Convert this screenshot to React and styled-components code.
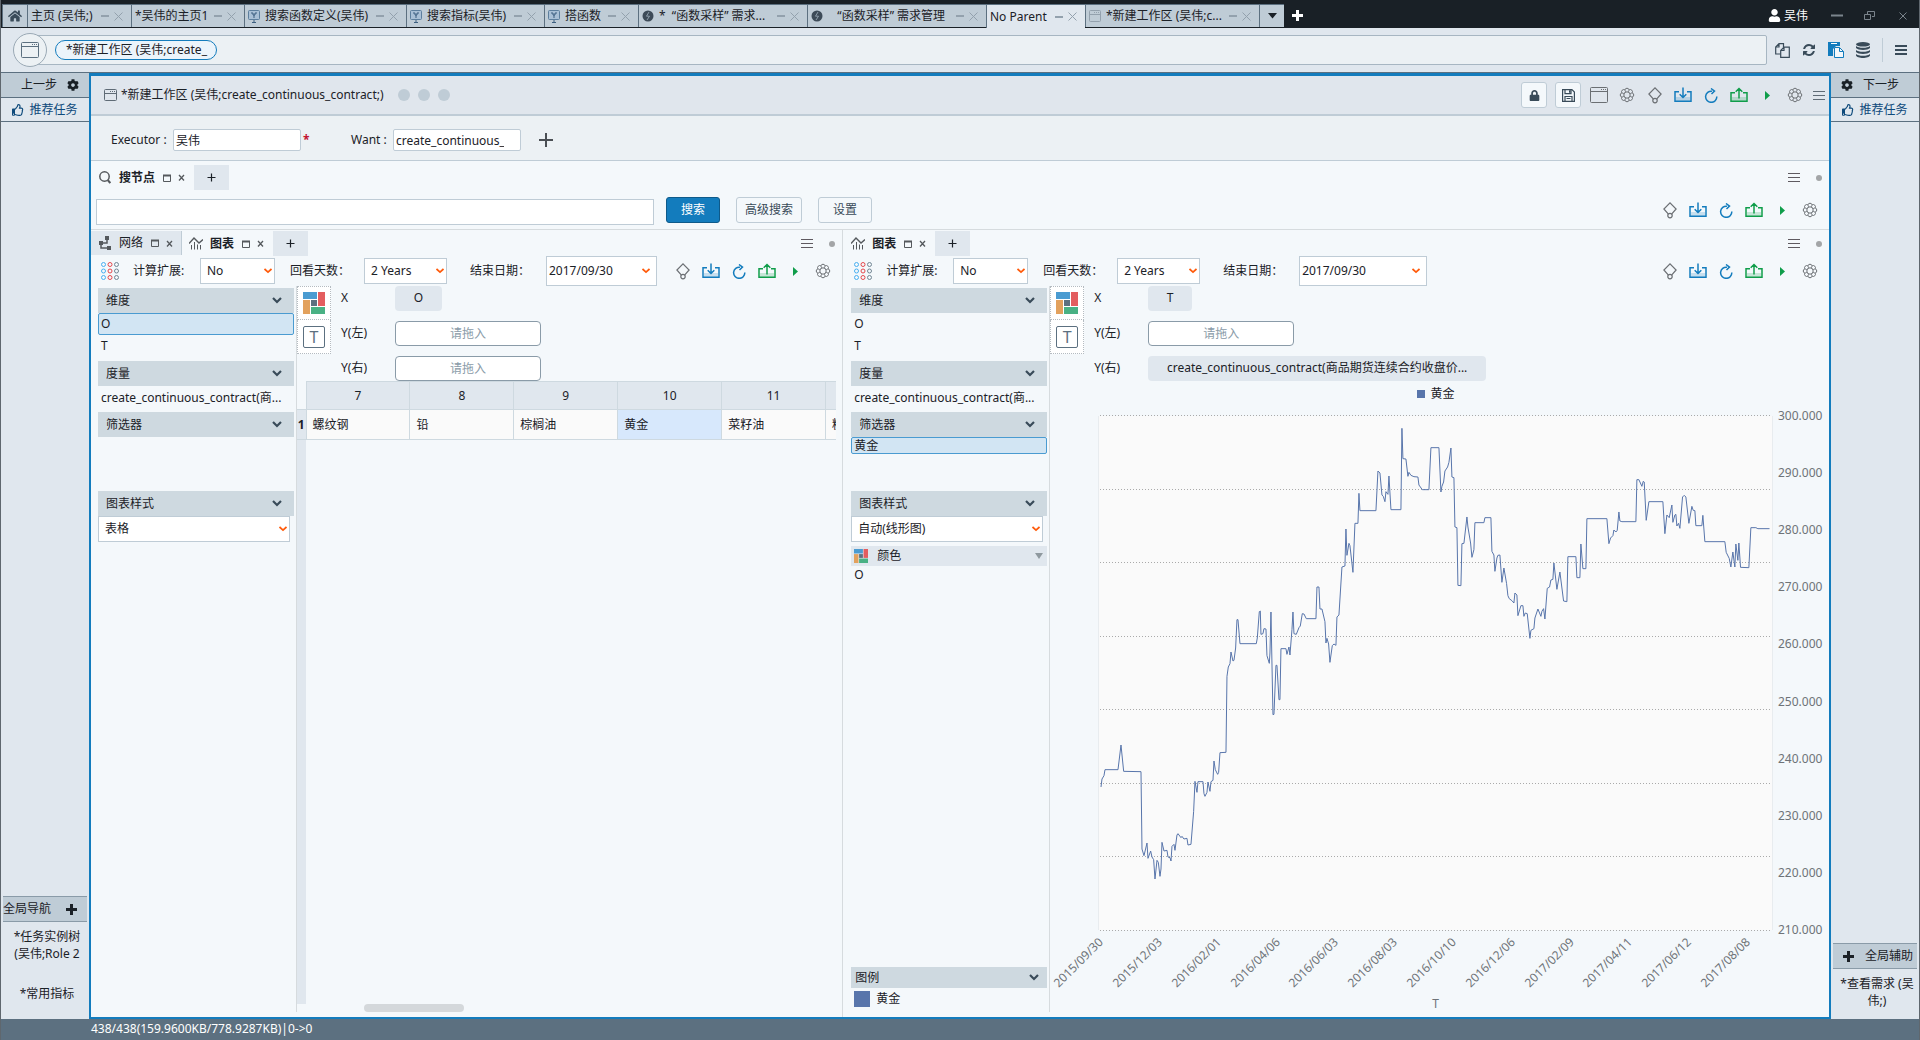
import React from "react";
import styled, { createGlobalStyle, css } from "styled-components";
import { FaHome, FaUser, FaCog, FaLock, FaRegThumbsUp } from "react-icons/fa";

const c = {
  dark: "#192026",
  text: "#1b2127",
  slate: "#5c7080",
  line: "#bfccd6",
  head: "#ced9e0",
  chrome: "#e0e7ee",
  form: "#ecf1f4",
  panel: "#f4f8fb",
  rule: "#d6dbde",
  blue: "#137cbd",
  green: "#0f9d4a",
  orange: "#ff5a0a",
  series: "#5875ab",
};

const GlobalStyle = createGlobalStyle`
  *, *::before, *::after { box-sizing: border-box; }
  body { margin: 0; }
  body, button, input, select, table {
    font: 12px/16px "Noto Sans", "Noto Sans CJK SC", sans-serif;
    color: ${c.text};
  }
  button { padding: 0; border: 0; background: none; cursor: pointer; }
  svg { display: block; flex: none; }
`;

/* ---------- icons ---------- */

const Svg = ({ w = 16, h = w, children, ...rest }) => (
  <svg width={w} height={h} viewBox={`0 0 ${w} ${h}`} fill="none" stroke="currentColor" aria-hidden="true" {...rest}>
    {children}
  </svg>
);
const MinusIcon = () => <Svg w={8} h={12} strokeWidth="2"><path d="M0 6h8" /></Svg>;
const CrossIcon = ({ size = 9 }) => <Svg w={size}><path d={`M.5 .5L${size - 0.5} ${size - 0.5}M${size - 0.5} .5L.5 ${size - 0.5}`} /></Svg>;
const SmallCross = () => <Svg w={7} strokeWidth="1.3"><path d="M1 1l5 5.5M6 1L1 6.5" /></Svg>;
const MaxIcon = () => <Svg w={8} h={8}><path d="M.5 1v6.500h7V1" /><path d="M0 1.500h8" strokeWidth="2" /></Svg>;
const WindowIcon = ({ w = 18, h = 16 }) => (
  <Svg w={w} h={h}>
    <rect x=".5" y=".5" width={w - 1} height={h - 1} rx="1" />
    <path d={`M1 4.500h${w - 2}`} />
    <path d={`M${w - 7} 2.500h5`} strokeDasharray="1 1" />
  </Svg>
);
const gearPoint = (k, r) => {
  const a = ((22.5 + 45 * k) * Math.PI) / 180;
  return `${(8 + r * Math.cos(a)).toFixed(2)} ${(8 + r * Math.sin(a)).toFixed(2)}`;
};
const gearOutline = `M${gearPoint(0, 5.5)}` + [1, 2, 3, 4, 5, 6, 7, 8].map((k) => `A2.150 2.150 0 0 1 ${gearPoint(k, 5.5)}`).join("") + "Z";
const gearSpokes = [0, 1, 2, 3, 4, 5, 6, 7].map((k) => `M${gearPoint(k, 5.5)}L${gearPoint(k, 3.3)}`).join("");
const GearIcon = () => (
  <Svg w={16}>
    <path d={gearOutline} />
    <path d={gearSpokes} strokeWidth=".8" />
    <circle cx="8" cy="8" r="3.200" />
  </Svg>
);
const DiamondIcon = () => (
  <Svg w={14} h={17} strokeWidth="1.200">
    <path d="M5.200 11.800L.9 7 7 .9 13.100 7l-4.300 4.800" />
    <circle cx="7" cy="13.600" r="2.200" />
  </Svg>
);
const InboxIcon = () => (
  <Svg w={18} h={16} strokeWidth="1.500">
    <path d="M2 10h14v4H2z" fill="currentColor" opacity=".2" stroke="none" />
    <path d="M5 4.700H1v9.500h16V4.700h-4M9 .5v10M5.700 7.200L9 10.500l3.300-3.300" />
  </Svg>
);
const OutboxIcon = () => (
  <Svg w={18} h={16} strokeWidth="1.500">
    <path d="M2 10h14v4H2z" fill="currentColor" opacity=".2" stroke="none" />
    <path d="M5 5.700H1v8.500h16V5.700h-4M9 11.500V1.500M5.700 4.800L9 1.500l3.300 3.300" />
  </Svg>
);
const RedoIcon = () => (
  <Svg w={14} h={15} strokeWidth="1.500">
    <path d="M12.800 8.500A5.600 5.600 0 1 1 8 3.200" />
    <path d="M7 .5l3.500 2.600L7.500 6" />
  </Svg>
);
const PlayIcon = () => <Svg w={5} h={9}><path d="M0 0l5 4.500L0 9z" fill="currentColor" stroke="none" /></Svg>;
const MenuIcon = () => <Svg w={12} h={11}><path d="M0 1.500h12M0 5.500h12M0 9.500h12" /></Svg>;
const MenuBoldIcon = () => <Svg w={12} h={10} strokeWidth="2"><path d="M0 1h12M0 5h12M0 9h12" /></Svg>;
const ThinPlusIcon = () => <Svg w={14} strokeWidth="2"><path d="M7 0v14M0 7h14" /></Svg>;
const TabPlusIcon = () => <Svg w={9}><path d="M4.500 .5v8M.5 4.500h8" strokeWidth="1.200" /></Svg>;
const FatPlusIcon = () => <Svg w={11} strokeWidth="3"><path d="M5.500 0v11M0 5.500h11" /></Svg>;
const SearchIcon = () => <Svg w={12} h={13} strokeWidth="1.500"><circle cx="5.500" cy="5.500" r="4.700" /><path d="M8.700 9l2.600 3" strokeWidth="2" /></Svg>;
const NetworkIcon = () => (
  <Svg w={12} h={14} strokeWidth="1.500">
    <path d="M6 0h4v4H6zM0 5h4v4H0zM8 10h4v4H8z" fill="currentColor" stroke="none" />
    <path d="M8 3v4H3M2 8v4h7" />
  </Svg>
);
const ChartIcon = () => (
  <Svg w={14} h={13}>
    <path d="M0 6.500L5 1l5 5 4-3.500" strokeWidth="1.400" />
    <path d="M2.500 8v4.500M5.500 5v7.500M8.500 7.500v5M11.500 8v4.500" />
  </Svg>
);
const PresentIcon = () => (
  <Svg w={12} h={13}>
    <rect x=".5" y=".5" width="11" height="9" rx="1" fill="#a9c0d6" stroke="#5d7f9e" />
    <path d="M3 3h2v2h2V3h2M6 5v3M4 12.500h4M6 10v2" stroke="#3c5f80" />
  </Svg>
);
const BoltIcon = () => (
  <Svg w={12}>
    <circle cx="6" cy="6" r="5.500" fill="#3d4b58" stroke="none" />
    <path d="M7 2L4.500 6.200h3L5 10" stroke="#9fb0bd" strokeWidth=".8" />
  </Svg>
);
const FilesIcon = () => (
  <Svg w={15} h={15} strokeWidth="1.200">
    <path d="M5.500 11H.7V4L4 .7h4.500V4M4 .7V4H.7" />
    <path d="M5.700 14.300V7.500L9 4.200h5.300v10.100zM9 4.200v3.300H5.700" />
  </Svg>
);
const PasteIcon = () => (
  <Svg w={16}>
    <path d="M0 0h12v4H8L5 7v7H0z" fill="currentColor" stroke="none" />
    <path d="M3 1.500h6" stroke="#fff" />
    <path d="M6.500 5.500h5l4 4v6h-9z" fill="#f4f8fb" />
    <path d="M11.500 5.500v4h4" />
  </Svg>
);
const SaveIcon = () => (
  <Svg w={13} strokeWidth="1.200">
    <path d="M.6.6h9.300l2.500 2.500v9.300H.6z" />
    <path d="M3 .6v4h6v-4M3 12.400V7.500h7v4.900M4.500 9.500h4" />
    <path d="M7 1.200h1.500v2.500H7z" fill="currentColor" stroke="none" />
  </Svg>
);
const SyncIcon = () => (
  <svg width="14" height="14" viewBox="0 0 1792 1792" fill="currentColor" aria-hidden="true">
    <path d="M1639 1056q0 5-1 7-64 268-268 434.500t-478 166.500q-146 0-282.500-55t-243.500-157l-129 129q-19 19-45 19t-45-19-19-45v-448q0-26 19-45t45-19h448q26 0 45 19t19 45-19 45l-137 137q71 66 161 102t187 36q134 0 250-65t186-179q11-17 53-117 8-23 30-23h192q13 0 22.500 9.500t9.500 22.500zm25-800v448q0 26-19 45t-45 19h-448q-26 0-45-19t-19-45 19-45l138-138q-148-137-349-137-134 0-250 65t-186 179q-11 17-53 117-8 23-30 23h-199q-13 0-22.500-9.500t-9.500-22.500v-7q65-268 270-434.500t480-166.500q146 0 284 55.500t245 156.500l130-129q19-19 45-19t45 19 19 45z" />
  </svg>
);
const DatabaseIcon = () => (
  <Svg w={14} h={16}>
    <g fill="currentColor" stroke="none">
      <ellipse cx="7" cy="2.300" rx="7" ry="2.300" />
      <path d="M0 4c2 2.400 12 2.400 14 0v2c-2 2.600-12 2.600-14 0z" />
      <path d="M0 8c2 2.400 12 2.400 14 0v2c-2 2.600-12 2.600-14 0z" />
      <path d="M0 12c2 2.400 12 2.400 14 0v1.500c-1 3.300-13 3.300-14 0z" />
    </g>
  </Svg>
);
const RestoreIcon = () => <Svg w={11} h={9}><path d="M3.500 3V.5h7v5H8M.5 3.500h6v5h-6z" /></Svg>;
const DotsIcon = () => (
  <Svg w={18}>
    {["#48aff0", "#e5484d", "#738694"].map((color, col) =>
      [0, 1, 2].map((row) => <circle key={color + row} cx={2.5 + col * 6.5} cy={2.5 + row * 6.5} r="2" stroke={color} />)
    )}
  </Svg>
);
const PaletteIcon = ({ size = 22 }) => (
  <svg width={size} height={size} viewBox="0 0 22 22" aria-hidden="true">
    <path d="M0 0h14v7H0z" fill="#4a9bd1" />
    <path d="M15 0h7v14h-7z" fill="#e35d5f" />
    <path d="M0 8h7v14H0z" fill="#e2a15d" />
    <path d="M8 8h6v6H8z" fill="#5c7080" />
    <path d="M8 15h14v7H8z" fill="#49b184" />
  </svg>
);
const Chevron = () => <Svg w={10} h={7} strokeWidth="2.200"><path d="M1 1l4 4 4-4" /></Svg>;
const OrangeChevron = () => <Svg w={8} h={6} stroke={c.orange} strokeWidth="1.700"><path d="M.5 1L4 4.200 7.500 1" /></Svg>;

/* ---------- page frame ---------- */

const Page = styled.div`
  display: flex;
  flex-direction: column;
  min-height: 100vh;
  border: solid #5f676e;
  border-width: 0 1px;
  background: ${c.chrome};
`;
const TitleBar = styled.header`
  display: flex;
  height: 28px;
  padding: 4px 0 0 1px;
  background: ${c.dark};
  color: #fff;
`;
const WindowTab = styled.div`
  display: flex;
  align-items: center;
  flex: 0 1 ${(p) => p.$w}px;
  min-width: 0;
  height: ${(p) => (p.$active ? 24 : 23)}px;
  padding: 0 8px 0 3px;
  gap: 5px;
  border: solid ${c.slate};
  border-width: 1px 0 0 1px;
  background: ${(p) => (p.$active ? c.chrome : c.line)};
  color: #93a1ad;
`;
const TabTitle = styled.a`
  flex: 1;
  overflow: hidden;
  white-space: pre;
  color: ${c.text};
  text-decoration: none;
`;
const BarButton = styled.button`
  display: flex;
  align-items: center;
  justify-content: center;
  width: ${(p) => p.$w}px;
  height: 23px;
  color: ${(p) => p.$color || c.dark};
  ${(p) => p.$tab && css`background: ${c.line}; border: solid ${c.slate}; border-width: 1px 0 0 1px;`}
`;
const IconButton = styled.button`
  display: flex;
  align-items: center;
  justify-content: center;
  color: inherit;
`;
const UserInfo = styled.div`
  display: flex;
  align-items: center;
  gap: 3px;
  height: 23px;
  margin: 0 12px 0 auto;
`;

const AddressRow = styled.div`
  display: flex;
  align-items: center;
  height: 45px;
  padding: 0 12px;
  border-bottom: 1px solid ${c.slate};
  color: #394b59;
`;
const AddressCircle = styled.button`
  display: flex;
  align-items: center;
  justify-content: center;
  width: 34px;
  height: 34px;
  border: 1px solid #9aa9b5;
  border-radius: 50%;
  background: ${c.form};
  color: ${c.slate};
  z-index: 1;
`;
const AddressBar = styled.div`
  display: flex;
  align-items: center;
  flex: 1;
  height: 30px;
  margin-left: -12px;
  padding-left: 19px;
  border: 1px solid #a7b6c2;
  border-radius: 2px;
  background: ${c.form};
`;
const Crumb = styled.a`
  width: 162px;
  height: 20px;
  padding: 0 4px 0 10px;
  border: 1px solid ${c.blue};
  border-radius: 10px;
  background: #ebf4fb;
  color: ${c.text};
  line-height: 18px;
  white-space: nowrap;
  text-decoration: none;
`;
const AddressTools = styled.div`
  display: flex;
  align-items: center;
  margin-left: 8px;
  gap: 12px;
`;
const PasteButton = styled(IconButton)`
  color: ${c.blue};
`;
const ToolDivider = styled.span`
  width: 1px;
  height: 24px;
  background: ${c.line};
`;

const Columns = styled.div`
  display: flex;
  flex: 1;
`;
const Side = styled.aside`
  display: flex;
  flex-direction: column;
  flex: none;
  width: 88px;
`;
const SideHead = styled.div`
  display: flex;
  align-items: center;
  justify-content: ${(p) => (p.$end ? "flex-end" : "flex-start")};
  gap: 10px;
  height: 25px;
  padding: 0 10px;
  border-bottom: 1px solid ${c.slate};
  background: ${c.line};
`;
const SideLink = styled.a`
  display: flex;
  align-items: center;
  justify-content: center;
  gap: 5px;
  height: 24px;
  border-bottom: 1px solid ${c.slate};
  color: #0e4a7b;
  text-decoration: none;
`;
const SideGroup = styled.nav`
  margin: auto 2px 0;
`;
const GroupHead = styled.div`
  display: flex;
  align-items: center;
  justify-content: space-between;
  height: 26px;
  padding: ${(p) => (p.$end ? "0 4px 0 10px" : "0 10px 0 0")};
  border: solid #8a9ba8;
  border-width: 1px 0;
  background: ${c.line};
`;
const GroupLink = styled.a`
  display: block;
  padding: 6px 2px 0 6px;
  margin-bottom: ${(p) => (p.$end ? 10 : 17)}px;
  color: ${c.text};
  line-height: 17px;
  text-align: center;
  text-decoration: none;
`;
const StatusBar = styled.footer`
  height: 21px;
  padding-left: 90px;
  background: ${c.slate};
  color: #fff;
  line-height: 20px;
`;

/* ---------- workspace ---------- */

const Workspace = styled.main`
  display: flex;
  flex-direction: column;
  flex: 1;
  min-width: 0;
  border: solid ${c.blue};
  border-width: 3px 2px 2px;
  background: ${c.panel};
`;
const WorkHead = styled.div`
  display: flex;
  align-items: center;
  height: 40px;
  padding: 0 4px 0 13px;
  gap: 4px;
  border-bottom: 2px solid ${c.line};
  background: #e0e6ed;
  color: #5f6b76;
`;
const WorkTitle = styled.h1`
  margin: 0 10px 0 0;
  font: inherit;
  color: ${c.text};
`;
const StateDot = styled.span`
  width: 12px;
  height: 12px;
  margin-right: 4px;
  border-radius: 50%;
  background: ${c.line};
`;
const HeadActions = styled.div`
  display: flex;
  align-items: center;
  gap: 8px;
  margin-left: auto;
`;
const BoxButton = styled(IconButton)`
  width: 26px;
  height: 26px;
  border: 1px solid ${c.line};
  border-radius: 3px;
  background: ${c.panel};
  color: #394b59;
`;
const Tools = styled.div`
  display: flex;
  margin: ${(p) => (p.$flush ? "0" : "0 5px 0 auto")};
`;
const Tool = styled(IconButton)`
  width: 28px;
  height: 26px;
  color: ${(p) => p.$color || "#6b6f73"};
`;

const FormRow = styled.form`
  display: flex;
  align-items: center;
  height: 45px;
  padding: 4px 20px 0;
  border-bottom: 1px solid ${c.line};
  background: ${c.form};
`;
const FieldLabel = styled.label`
  width: ${(p) => p.$w}px;
`;
const FieldInput = styled.input`
  width: 128px;
  height: 22px;
  padding: 0 16px 0 2px;
  border: 1px solid ${c.line};
  border-radius: 2px;
  background: #fff;
`;
const Required = styled.span`
  width: 50px;
  padding-left: 2px;
  color: #c2122f;
  font-weight: 700;
`;
const AddField = styled(IconButton)`
  margin-left: 18px;
  color: #4a4f54;
`;

const SearchSection = styled.section`
  border-bottom: 1px solid ${c.rule};
`;
const PaneTabs = styled.div`
  display: flex;
  align-items: stretch;
  height: ${(p) => p.$h || 26}px;
  padding-top: ${(p) => p.$top || 1}px;
`;
const PaneTab = styled.div`
  display: flex;
  align-items: center;
  height: ${(p) => (p.$muted ? 24 : 25)}px;
  padding: 0 8px;
  border-right: 1px solid ${(p) => (p.$muted ? c.line : "transparent")};
  background: ${(p) => (p.$muted ? c.chrome : "transparent")};
  color: #55595d;
`;
const PaneTabIcon = styled.span`
  display: flex;
  justify-content: center;
  width: 12px;
  margin-right: 8px;
`;
const PaneTabName = styled.span`
  margin-right: 1px;
  color: ${c.text};
  white-space: nowrap;
  font-weight: ${(p) => (p.$bold ? 700 : 400)};
`;
const PaneTabButton = styled(IconButton)`
  margin-left: 7px;
`;
const AddTab = styled(IconButton)`
  width: 35px;
  height: 25px;
  background: ${c.chrome};
  color: ${c.text};
`;
const PaneMenu = styled.div`
  display: flex;
  align-items: center;
  gap: 16px;
  margin-left: auto;
  padding-right: 7px;
  color: #5f5a60;
`;
const PaneDot = styled.span`
  width: 6px;
  height: 6px;
  border-radius: 50%;
  background: #a3a5a7;
`;
const SearchRow = styled.form`
  display: flex;
  align-items: flex-start;
  padding: 7px 0 4px 5px;
`;
const SearchInput = styled.input`
  flex: 0 1 558px;
  height: 26px;
  margin: 2px 12px 0 0;
  border: 1px solid ${c.line};
  background: #fff;
`;
const PushButton = styled.button`
  min-width: 54px;
  height: 26px;
  margin-right: 16px;
  padding: 0 8px;
  border: 1px solid ${(p) => (p.$primary ? "#0e5a8a" : c.line)};
  border-radius: 3px;
  background: ${(p) => (p.$primary ? c.blue : c.panel)};
  color: ${(p) => (p.$primary ? "#fff" : "#394b59")};
`;

const Panels = styled.div`
  display: flex;
  flex: 1;
`;
const Panel = styled.section`
  display: flex;
  flex-direction: column;
  flex: ${(p) => p.$grow} 1 0;
  min-width: 0;
  ${(p) => p.$divided && css`border-left: 1px solid ${c.rule}; padding-left: 1px;`}
`;
const PanelTools = styled.div`
  display: flex;
  align-items: center;
  height: 30px;
  padding-left: 10px;
`;
const ParamLabel = styled.label`
  width: ${(p) => p.$w}px;
  margin-left: 14px;
  padding-left: ${(p) => p.$indent || 0}px;
  white-space: nowrap;
`;
const SelectWrap = styled.span`
  display: grid;
  flex: none;
  align-items: center;
  width: ${(p) => p.$w}px;
  height: ${(p) => p.$h || 26}px;
  svg { grid-area: 1 / 1; justify-self: end; margin-right: ${(p) => p.$inset || 3}px; pointer-events: none; }
`;
const Select = styled.select`
  grid-area: 1 / 1;
  width: 100%;
  height: 100%;
  padding: 0 ${(p) => p.$pad || 6}px;
  border: 1px solid ${c.line};
  border-radius: 0;
  background: #fff;
  appearance: none;
`;

const PanelBody = styled.div`
  display: flex;
  flex: 1;
  min-height: 0;
`;
const Fields = styled.div`
  display: flex;
  flex-direction: column;
  flex: none;
  width: 206px;
  margin-bottom: 5px;
  padding: 2px 2px 2px 7px;
  border-right: 1px solid ${c.rule};
`;
const FieldHead = styled.button`
  display: flex;
  align-items: center;
  justify-content: space-between;
  height: ${(p) => (p.$small ? 21 : 25)}px;
  padding: ${(p) => (p.$small ? "0 8px 0 4px" : "0 12px 0 8px")};
  background: ${c.head};
  svg { color: #394b59; }
`;
const FieldBody = styled.div`
  min-height: ${(p) => p.$h}px;
`;
const FieldItem = styled.div`
  height: ${(p) => p.$h || 22}px;
  padding-left: 2px;
  border: 1px solid ${(p) => (p.$on ? "#4a9bd1" : "transparent")};
  border-radius: 2px;
  background: ${(p) => (p.$on ? "#d2e5f3" : "transparent")};
  line-height: ${(p) => (p.$h || 22) - 2}px;
  white-space: nowrap;
`;
const ColorHead = styled.div`
  display: flex;
  align-items: center;
  height: 20px;
  margin-top: 4px;
  padding: 0 4px 0 3px;
  gap: 9px;
  background: ${c.chrome};
  svg:last-child { margin-left: auto; color: #8f999f; }
`;
const LegendBlock = styled.div`
  display: flex;
  flex-direction: column;
  margin-top: auto;
`;
const LegendEntry = styled.div`
  display: flex;
  align-items: center;
  gap: 6px;
  padding: 3px;
`;
const Swatch = styled.span`
  width: ${(p) => p.$s}px;
  height: ${(p) => p.$s}px;
  background: ${c.series};
`;

const Stage = styled.div`
  display: flex;
  flex-direction: column;
  flex: 1;
  min-width: 0;
`;
const DropArea = styled.div`
  display: flex;
  align-items: flex-start;
  height: 95px;
`;
const MarkColumn = styled.div`
  display: flex;
  flex-direction: column;
  width: 34px;
  margin-right: 10px;
`;
const MarkButton = styled(IconButton)`
  width: 34px;
  height: 34px;
  border: 1px dotted #b4bbc1;
  background: #fff;
  & + & { border-top: 0; }
`;
const TextMark = styled.span`
  width: 22px;
  height: 22px;
  border: 1px solid ${c.slate};
  border-radius: 2px;
  color: ${c.slate};
  font-size: 16px;
  line-height: 21px;
`;
const AxisGrid = styled.div`
  display: grid;
  grid-template-columns: 54px auto;
  grid-auto-rows: 25px;
  row-gap: 10px;
  justify-items: start;
  line-height: 24px;
`;
const Chip = styled.span`
  width: ${(p) => p.$w}px;
  height: 25px;
  border-radius: 4px;
  background: ${c.chrome};
  text-align: center;
  white-space: nowrap;
`;
const DropInput = styled.input`
  width: 146px;
  height: 25px;
  border: 1px solid #8a9ba8;
  border-radius: 4px;
  background: #fff;
  text-align: center;
  &::placeholder { color: #8a9ba8; opacity: 1; }
`;

const TableArea = styled.div`
  display: flex;
  flex-direction: column;
  flex: 1;
  margin: 0 6px 5px 0;
  overflow: hidden;
`;
const DataTable = styled.table`
  width: 633px;
  table-layout: fixed;
  border-collapse: collapse;
  thead th {
    height: 28px;
    padding: 0;
    border: 1px solid ${c.head};
    background: ${c.chrome};
    font-weight: 400;
  }
  thead td { width: 9px; padding: 0; }
  tbody th { height: 30px; padding: 0; background: ${c.chrome}; border-bottom: 1px solid ${c.head}; border-top: 1px solid ${c.head}; }
  tbody td { padding: 0 6px; border: 1px solid ${c.head}; white-space: nowrap; }
`;
const Cell = styled.td`
  background: ${(p) => (p.$on ? "#d7e8fc" : "#fafafa")};
`;
const RowRail = styled.div`
  flex: 1;
  width: 9px;
  background: ${c.chrome};
`;
const ScrollThumb = styled.div`
  width: 100px;
  height: 8px;
  margin-left: 67px;
  border-radius: 4px;
  background: #d4d8db;
`;

const ChartGrid = styled.figure`
  display: grid;
  grid-template: 35px minmax(0, 1fr) 62px 25px / 48px 1fr 56px;
  flex: 1;
  margin: 0;
  color: #6e7378;
`;
const ChartLegend = styled.figcaption`
  display: flex;
  grid-area: 1 / 2;
  align-items: center;
  justify-content: center;
  gap: 6px;
  height: 25px;
  color: ${c.text};
`;
const Plot = styled.div`
  display: grid;
  grid-area: 2 / 2;
  padding: 0 2px 0 1px;
  border: solid #e8ecef;
  border-width: 0 1px;
  background: #fafafa;
`;
const PlotSvg = styled.svg`
  width: 100%;
  height: 0;
  min-height: 100%;
  overflow: visible;
  line { stroke: #aaa; stroke-dasharray: 1 2; vector-effect: non-scaling-stroke; shape-rendering: crispEdges; }
  polyline { fill: none; stroke: ${c.series}; vector-effect: non-scaling-stroke; }
`;
const ValueAxis = styled.div`
  display: flex;
  grid-area: 2 / 3;
  flex-direction: column;
  justify-content: space-between;
  padding-left: 5px;
`;
const ValueTick = styled.span`
  display: flex;
  align-items: center;
  height: 0;
`;
const DateAxis = styled.div`
  display: flex;
  grid-area: 3 / 2;
  justify-content: space-between;
  margin: 0 25px 0 3px;
  padding-top: 2px;
`;
const DateTick = styled.span`
  display: flex;
  justify-content: flex-end;
  width: 0;
  height: 16px;
  white-space: nowrap;
  transform: rotate(-45deg);
`;
const AxisName = styled.span`
  grid-area: 4 / 2;
  line-height: 24px;
  text-align: center;
`;

/* ---------- data ---------- */

const windowTabs = [
  { title: "主页 (吴伟;)", w: 104 },
  { title: "*吴伟的主页1", w: 113 },
  { title: "搜索函数定义(吴伟)", w: 162, icon: <PresentIcon /> },
  { title: "搜索指标(吴伟)", w: 138, icon: <PresentIcon /> },
  { title: "搭函数", w: 94, icon: <PresentIcon /> },
  { title: "*  “函数采样” 需求...", w: 169, icon: <BoltIcon /> },
  { title: "   “函数采样” 需求管理", w: 179, icon: <BoltIcon /> },
  { title: "No Parent", w: 99, active: true },
  { title: "*新建工作区 (吴伟;c...", w: 174, icon: <WindowIcon w={12} h={12} /> },
];

const values = ["300.000", "290.000", "280.000", "270.000", "260.000", "250.000", "240.000", "230.000", "220.000", "210.000"];
const dates = ["2015/09/30", "2015/12/03", "2016/02/01", "2016/04/06", "2016/06/03", "2016/08/03", "2016/10/10", "2016/12/06", "2017/02/09", "2017/04/11", "2017/06/12", "2017/08/08"];

const goldSeries = `63,1162 66,1138 72,1128 75,1110 114,1110 123,1036 131,1115 183,1116 186,1348 192,1368 201,1330 204,1376 212,1354 216,1372 221,1380 225,1438 231,1382 235,1388 240,1430 243,1408 246,1328 252,1354 261,1352 264,1372 270,1374 273,1384 276,1340 282,1334 285,1352 291,1306 294,1302 303,1314 306,1310 312,1318 321,1316 324,1336 333,1334 341,1235 345,1145 351,1178 354,1146 369,1146 372,1182 375,1190 381,1178 384,1147 390,1175 393,1146 399,1142 402,1084 406,1110 413,1124 416,1118 420,1059 438,1058 441,830 445,802 450,792 453,757 459,784 462,782 467,745 471,660 474,660 480,732 529,732 532,715 538,636 541,634 543,704 549,702 552,687 558,688 561,768 568,791 570,760 573,637 579,945 582,944 588,797 591,797 597,900 600,900 603,747 618,747 621,764 627,742 630,766 636,690 639,637 642,702 649,704 657,684 661,679 667,642 672,643 679,657 708,657 711,562 717,562 720,628 726,628 735,666 738,730 741,716 746,733 750,788 757,738 762,733 768,737 771,652 777,646 786,502 795,499 798,388 801,467 807,431 810,438 819,518 825,371 834,371 837,281 840,333 888,333 894,214 900,220 906,286 910,290 915,306 918,276 924,284 927,229 933,330 963,330 966,86 969,177 978,178 984,230 987,218 993,227 1002,231 1014,232 1017,256 1027,270 1047,270 1053,144 1077,144 1083,277 1086,260 1091,247 1095,214 1103,202 1107,188 1113,145 1116,232 1122,234 1125,382 1131,384 1134,557 1143,558 1146,432 1152,431 1161,352 1164,382 1172,430 1176,473 1182,450 1185,369 1212,369 1215,354 1233,354 1236,455 1242,466 1245,515 1251,475 1254,467 1260,466 1266,548 1272,505 1280,552 1284,588 1288,597 1296,603 1302,610 1305,580 1311,586 1314,648 1323,618 1329,618 1332,650 1336,640 1342,642 1350,716 1353,692 1362,687 1365,655 1374,628 1383,650 1386,635 1391,627 1395,658 1402,566 1409,562 1413,541 1419,539 1422,490 1431,569 1440,517 1451,604 1461,606 1464,471 1488,471 1491,534 1500,534 1503,433 1509,507 1518,507 1521,357 1581,357 1587,432 1592,415 1599,408 1602,391 1608,397 1612,392 1617,337 1620,364 1626,366 1668,366 1671,240 1677,240 1686,260 1690,245 1693,247 1699,362 1707,306 1749,306 1755,402 1761,346 1768,354 1776,316 1779,368 1785,346 1788,344 1791,379 1796,371 1800,386 1808,292 1813,287 1818,292 1827,371 1836,320 1840,332 1845,333 1848,378 1866,378 1869,347 1875,426 1935,426 1939,458 1948,476 1953,502 1959,457 1965,502 1968,433 1974,482 1977,430 1982,503 2007,504 2013,384 2028,384 2034,387 2069,387`;

const columns = [["7", "螺纹钢"], ["8", "铅"], ["9", "棕榈油"], ["10", "黄金"], ["11", "菜籽油"], ["", "粳米"]];

/* ---------- parts ---------- */

const ActionIcons = ({ flush, lead }) => (
  <Tools $flush={flush}>
    {lead}
    <Tool type="button" aria-label="标记"><DiamondIcon /></Tool>
    <Tool type="button" aria-label="导入" $color={c.blue}><InboxIcon /></Tool>
    <Tool type="button" aria-label="刷新" $color={c.blue}><RedoIcon /></Tool>
    <Tool type="button" aria-label="导出" $color={c.green}><OutboxIcon /></Tool>
    <Tool type="button" aria-label="运行" $color={c.green}><PlayIcon /></Tool>
    <Tool type="button" aria-label="设置"><GearIcon /></Tool>
  </Tools>
);

const PaneTabItem = ({ icon, name, muted }) => (
  <PaneTab $muted={muted}>
    <PaneTabIcon>{icon}</PaneTabIcon>
    <PaneTabName $bold={!muted}>{name}</PaneTabName>
    <PaneTabButton type="button" aria-label="最大化"><MaxIcon /></PaneTabButton>
    <PaneTabButton type="button" aria-label="关闭"><SmallCross /></PaneTabButton>
  </PaneTab>
);

const PaneCorner = () => (
  <PaneMenu>
    <IconButton type="button" aria-label="菜单"><MenuIcon /></IconButton>
    <PaneDot />
  </PaneMenu>
);

const Picker = ({ id, w, h, inset, pad, value, label }) => (
  <SelectWrap $w={w} $h={h} $inset={inset}>
    <Select id={id} $pad={pad} defaultValue={value} aria-label={label}>
      <option>{value}</option>
    </Select>
    <OrangeChevron />
  </SelectWrap>
);

const Section = ({ title, h, children }) => (
  <>
    <FieldHead type="button">{title}<Chevron /></FieldHead>
    <FieldBody $h={h}>{children}</FieldBody>
  </>
);

const ChartPanel = ({ id, grow, divided, network, selected, filter, style, x, right, dateWidth, extra, legend, children }) => (
  <Panel $grow={grow} $divided={divided}>
    <PaneTabs>
      {network && <PaneTabItem muted icon={<NetworkIcon />} name="网络" />}
      <PaneTabItem icon={<ChartIcon />} name="图表" />
      <AddTab type="button" aria-label="新建标签"><TabPlusIcon /></AddTab>
      <PaneCorner />
    </PaneTabs>
    <PanelTools>
      <DotsIcon />
      <ParamLabel htmlFor={`${id}-ext`} $w={67}>计算扩展:</ParamLabel>
      <Picker id={`${id}-ext`} w={75} value="No" />
      <ParamLabel htmlFor={`${id}-days`} $w={75} $indent={1}>回看天数：</ParamLabel>
      <Picker id={`${id}-days`} w={83} value="2 Years" />
      <ParamLabel htmlFor={`${id}-end`} $w={85} $indent={9}>结束日期：</ParamLabel>
      <Picker id={`${id}-end`} w={dateWidth} h={30} pad={2} inset={7} value="2017/09/30" />
      <ActionIcons />
    </PanelTools>
    <PanelBody>
      <Fields>
        <Section title="维度" h={48}>
          <FieldItem $on={selected}>O</FieldItem>
          <FieldItem>T</FieldItem>
        </Section>
        <Section title="度量" h={26}>
          <FieldItem $h={24}>create_continuous_contract(商...</FieldItem>
        </Section>
        <Section title="筛选器" h={54}>{filter && <FieldItem $on $h={17}>{filter}</FieldItem>}</Section>
        <Section title="图表样式" h={26}>
          <Picker id={`${id}-style`} w={192} value={style} label="图表样式" />
        </Section>
        {extra}
        {legend}
      </Fields>
      <Stage>
        <DropArea>
          <MarkColumn>
            <MarkButton type="button" aria-label="颜色"><PaletteIcon /></MarkButton>
            <MarkButton type="button" aria-label="文本"><TextMark>T</TextMark></MarkButton>
          </MarkColumn>
          <AxisGrid>
            <span>X</span>
            <Chip $w={x === "O" ? 47 : 44}>{x}</Chip>
            <label htmlFor={`${id}-yl`}>Y(左)</label>
            <DropInput id={`${id}-yl`} placeholder="请拖入" />
            {right ? <span>Y(右)</span> : <label htmlFor={`${id}-yr`}>Y(右)</label>}
            {right ? <Chip $w={338}>{right}</Chip> : <DropInput id={`${id}-yr`} placeholder="请拖入" />}
          </AxisGrid>
        </DropArea>
        {children}
      </Stage>
    </PanelBody>
  </Panel>
);

const CommodityTable = () => (
  <TableArea>
    <DataTable>
      <thead>
        <tr><td />{columns.map(([n]) => <th key={n} scope="col">{n}</th>)}</tr>
      </thead>
      <tbody>
        <tr>
          <th scope="row">1</th>
          {columns.map(([n, name]) => <Cell key={n} $on={n === "10"}>{name}</Cell>)}
        </tr>
      </tbody>
    </DataTable>
    <RowRail />
    <ScrollThumb />
  </TableArea>
);

const GoldChart = () => (
  <ChartGrid>
    <ChartLegend><Swatch $s={8} />黄金</ChartLegend>
    <Plot>
      <PlotSvg viewBox="60 49 2010 1542" preserveAspectRatio="none" role="img" aria-label="黄金">
        {[0, 1, 2, 3, 4, 5, 6, 7].map((i) => {
          const y = 49 + (1542 * i) / 7;
          return <line key={i} x1="60" x2="2070" y1={y} y2={y} />;
        })}
        <polyline points={goldSeries} />
      </PlotSvg>
    </Plot>
    <ValueAxis>{values.map((v) => <ValueTick key={v}>{v}</ValueTick>)}</ValueAxis>
    <DateAxis>{dates.map((d) => <DateTick key={d}>{d}</DateTick>)}</DateAxis>
    <AxisName>T</AxisName>
  </ChartGrid>
);

export default function App() {
  return (
    <Page>
      <GlobalStyle />
      <TitleBar>
        <BarButton $tab $w={25} aria-label="主页" $color="#394b59"><FaHome size={14} /></BarButton>
        {windowTabs.map((t) => (
          <WindowTab key={t.title} $w={t.w} $active={t.active}>
            {t.icon}
            <TabTitle href="#">{t.title}</TabTitle>
            <IconButton aria-label="最小化"><MinusIcon /></IconButton>
            <IconButton aria-label="关闭"><CrossIcon /></IconButton>
          </WindowTab>
        ))}
        <BarButton $tab $w={25} aria-label="更多标签">
          <Svg w={9} h={6}><path d="M0 0h9L4.500 5.500z" fill="currentColor" stroke="none" /></Svg>
        </BarButton>
        <BarButton $w={26} aria-label="新建标签" $color="#fff"><FatPlusIcon /></BarButton>
        <UserInfo><FaUser size={13} />吴伟</UserInfo>
        <BarButton $w={33} aria-label="最小化" $color="#7b848c"><Svg w={12} h={3}><path d="M0 1.500h12" strokeWidth="2" /></Svg></BarButton>
        <BarButton $w={33} aria-label="还原" $color="#7b848c"><RestoreIcon /></BarButton>
        <BarButton $w={33} aria-label="关闭" $color="#7b848c"><CrossIcon size={8} /></BarButton>
      </TitleBar>

      <AddressRow>
        <AddressCircle aria-label="工作区"><WindowIcon w={18} h={16} /></AddressCircle>
        <AddressBar>
          <Crumb href="#">*新建工作区 (吴伟;create_</Crumb>
        </AddressBar>
        <AddressTools>
          <IconButton aria-label="复制"><FilesIcon /></IconButton>
          <IconButton aria-label="同步"><SyncIcon /></IconButton>
          <PasteButton aria-label="粘贴"><PasteIcon /></PasteButton>
          <IconButton aria-label="数据"><DatabaseIcon /></IconButton>
          <ToolDivider />
          <IconButton aria-label="菜单"><MenuBoldIcon /></IconButton>
        </AddressTools>
      </AddressRow>

      <Columns>
        <Side>
          <SideHead $end>上一步<FaCog size={12} color={c.dark} /></SideHead>
          <SideLink href="#"><FaRegThumbsUp size={12} />推荐任务</SideLink>
          <SideGroup>
            <GroupHead>全局导航<FatPlusIcon /></GroupHead>
            <GroupLink href="#">*任务实例树<br />(吴伟;Role 2</GroupLink>
            <GroupLink href="#">*常用指标</GroupLink>
          </SideGroup>
        </Side>

        <Workspace>
          <WorkHead>
            <WindowIcon w={13} h={12} />
            <WorkTitle>*新建工作区 (吴伟;create_continuous_contract;)</WorkTitle>
            <StateDot /><StateDot /><StateDot />
            <HeadActions>
              <BoxButton aria-label="锁定"><FaLock size={11} /></BoxButton>
              <BoxButton aria-label="保存"><SaveIcon /></BoxButton>
            </HeadActions>
            <ActionIcons flush lead={<><Tool aria-label="窗口"><WindowIcon /></Tool><Tool aria-label="配置"><GearIcon /></Tool></>} />
            <IconButton aria-label="菜单"><MenuIcon /></IconButton>
          </WorkHead>

          <FormRow>
            <FieldLabel htmlFor="executor" $w={62}>Executor :</FieldLabel>
            <FieldInput id="executor" defaultValue="吴伟" />
            <Required>*</Required>
            <FieldLabel htmlFor="want" $w={42}>Want :</FieldLabel>
            <FieldInput id="want" defaultValue="create_continuous_" />
            <AddField type="button" aria-label="添加"><ThinPlusIcon /></AddField>
          </FormRow>

          <SearchSection>
            <PaneTabs $h={29} $top={4}>
              <PaneTabItem icon={<SearchIcon />} name="搜节点" />
              <AddTab type="button" aria-label="新建标签"><TabPlusIcon /></AddTab>
              <PaneCorner />
            </PaneTabs>
            <SearchRow>
              <SearchInput aria-label="搜索" />
              <PushButton type="button" $primary>搜索</PushButton>
              <PushButton type="button">高级搜索</PushButton>
              <PushButton type="button">设置</PushButton>
              <ActionIcons />
            </SearchRow>
          </SearchSection>

          <Panels>
            <ChartPanel id="left" grow={752} network selected style="表格" x="O" dateWidth={111}>
              <CommodityTable />
            </ChartPanel>
            <ChartPanel
              id="right"
              grow={986}
              divided
              filter="黄金"
              style="自动(线形图)"
              x="T"
              dateWidth={128}
              right="create_continuous_contract(商品期货连续合约收盘价..."
              extra={
                <>
                  <ColorHead>
                    <PaletteIcon size={14} />颜色
                    <Svg w={8} h={6}><path d="M0 0h8L4 6z" fill="currentColor" stroke="none" /></Svg>
                  </ColorHead>
                  <FieldItem $h={17}>O</FieldItem>
                </>
              }
              legend={
                <LegendBlock>
                  <FieldHead type="button" $small>图例<Chevron /></FieldHead>
                  <LegendEntry><Swatch $s={16} />黄金</LegendEntry>
                </LegendBlock>
              }
            >
              <GoldChart />
            </ChartPanel>
          </Panels>
        </Workspace>

        <Side>
          <SideHead><FaCog size={12} color={c.dark} />下一步</SideHead>
          <SideLink href="#"><FaRegThumbsUp size={12} />推荐任务</SideLink>
          <SideGroup>
            <GroupHead $end><FatPlusIcon />全局辅助</GroupHead>
            <GroupLink $end href="#">*查看需求 (吴伟;)</GroupLink>
          </SideGroup>
        </Side>
      </Columns>

      <StatusBar>438/438(159.9600KB/778.9287KB)|0-&gt;0</StatusBar>
    </Page>
  );
}
